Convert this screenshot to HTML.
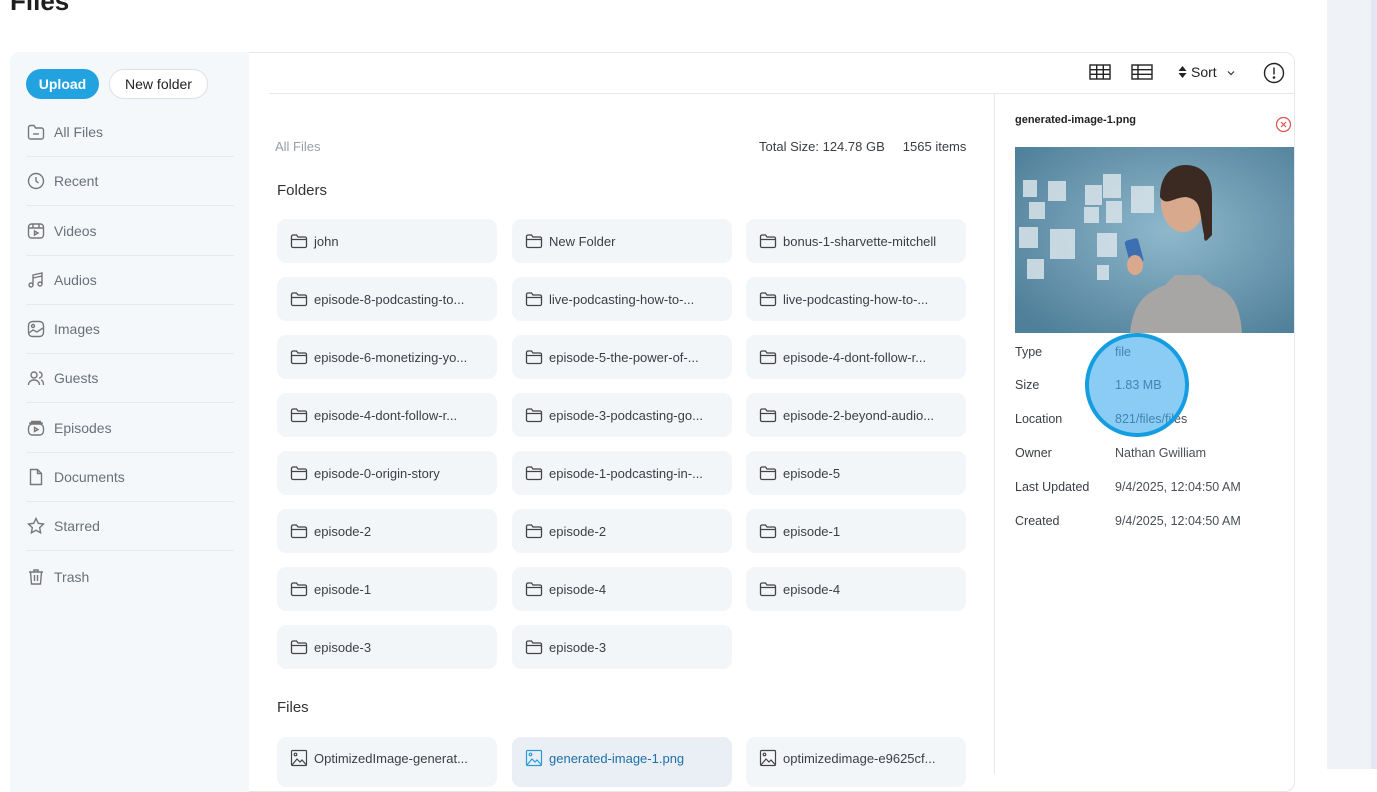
<!DOCTYPE html>
<html><head><meta charset="utf-8">
<style>
*{margin:0;padding:0;box-sizing:border-box}
body{width:1377px;height:769px;overflow:hidden;background:#fff;font-family:"Liberation Sans",sans-serif;position:relative;color:#333}
.abs{position:absolute}
.title{left:10px;top:-14px;font-size:26px;font-weight:bold;color:#1e1e1e}
.card{left:10px;top:52px;width:1285px;height:740px;border:1px solid #e4e7ec;border-radius:10px;background:#fff;overflow:hidden}
.side{left:10px;top:52px;width:239px;height:740px;background:#f5f8fb;border-radius:10px 0 0 0}
.btn{top:69px;height:30px;border-radius:15px;font-size:14px;display:flex;align-items:center;justify-content:center}
.nav{left:26px;width:208px;height:49px;display:flex;align-items:center;font-size:14px;color:#6a7079;border-bottom:1px solid #e6e9ed}
.nav svg{width:20px;height:20px;margin-right:8px;flex:none}
.fc{width:220px;height:44px;background:#f3f6f9;border-radius:9px;display:flex;align-items:center;padding-left:13px;font-size:13px;color:#3b3f45}
.fc svg{width:18px;height:18px;margin-right:6px;flex:none}
.lbl{left:1015px;font-size:12.5px;color:#3a3e44}
.val{left:1115px;font-size:12.5px;color:#4a4e55}
</style></head><body>
<div class="abs title">Files</div>
<div class="abs card"></div>
<div class="abs side"></div>
<div class="abs btn" style="left:26px;width:73px;background:#23a2e0;color:#fff;font-weight:bold">Upload</div>
<div class="abs btn" style="left:109px;width:99px;background:#fff;border:1px solid #dde1e6;color:#222">New folder</div>

<div class="abs" style="left:0;top:108px">
<div class="nav abs" style="top:0"><svg viewBox="0 0 20 20" fill="none" stroke="#777" stroke-width="1.4"><path d="M2.5 6V15a2 2 0 0 0 2 2h11a2 2 0 0 0 2-2V8a2 2 0 0 0-2-2H9.5L8 3.5H4.5a2 2 0 0 0-2 2z"/><path d="M7 12h6"/></svg>All Files</div>
<div class="nav abs" style="top:49px"><svg viewBox="0 0 20 20" fill="none" stroke="#777" stroke-width="1.4"><circle cx="10" cy="10" r="7.5"/><path d="M10 6v4l2.5 2"/></svg>Recent</div>
<div class="nav abs" style="top:99px"><svg viewBox="0 0 20 20" fill="none" stroke="#777" stroke-width="1.4"><rect x="2.5" y="3" width="15" height="14" rx="3"/><path d="M2.5 7h15M7 3v4M13 3v4M8.5 10v4l3.5-2z"/></svg>Videos</div>
<div class="nav abs" style="top:148px"><svg viewBox="0 0 20 20" fill="none" stroke="#777" stroke-width="1.4"><circle cx="5" cy="15" r="2"/><circle cx="14" cy="14" r="2"/><path d="M7 15V5l9-2v11M7 8l9-2"/></svg>Audios</div>
<div class="nav abs" style="top:197px"><svg viewBox="0 0 20 20" fill="none" stroke="#777" stroke-width="1.4"><rect x="2.5" y="2.5" width="15" height="15" rx="4"/><circle cx="7" cy="7" r="1.5"/><path d="M3 14l4-3 4 2 6-4"/></svg>Images</div>
<div class="nav abs" style="top:246px"><svg viewBox="0 0 20 20" fill="none" stroke="#777" stroke-width="1.4"><circle cx="8" cy="7" r="3"/><path d="M2.5 17c0-3 2.5-5 5.5-5s5.5 2 5.5 5M13 4a3 3 0 0 1 0 6M15 12c1.5.5 2.5 2.5 2.5 5"/></svg>Guests</div>
<div class="nav abs" style="top:296px"><svg viewBox="0 0 20 20" fill="none" stroke="#777" stroke-width="1.4"><rect x="2.5" y="6" width="15" height="11" rx="4"/><path d="M5 3.5h10M4 6V5h12v1M8.5 9.5v4l3.5-2z"/></svg>Episodes</div>
<div class="nav abs" style="top:345px"><svg viewBox="0 0 20 20" fill="none" stroke="#777" stroke-width="1.4"><path d="M4.5 2.5h7l4 4v11h-11z"/><path d="M11.5 2.5v4h4"/></svg>Documents</div>
<div class="nav abs" style="top:394px"><svg viewBox="0 0 20 20" fill="none" stroke="#777" stroke-width="1.4"><path d="M10 2.5l2.3 4.8 5.2.7-3.8 3.6.9 5.2L10 14.3l-4.6 2.5.9-5.2L2.5 8l5.2-.7z"/></svg>Starred</div>
<div class="nav abs" style="top:444px;border-bottom:none"><svg viewBox="0 0 20 20" fill="none" stroke="#777" stroke-width="1.4"><path d="M3 5h14M8 5V3h4v2M4.5 5l1 12h9l1-12M8.5 8v6M11.5 8v6"/></svg>Trash</div>
</div>

<div class="abs" style="left:269px;top:93px;width:1026px;height:1px;background:#e4e7ec"></div>
<svg class="abs" style="left:1089px;top:63px" width="22" height="18" viewBox="0 0 22 18" fill="none" stroke="#222" stroke-width="1.4"><rect x="1" y="2" width="20" height="14"/><path d="M1 6.7h20M1 11.3h20M7.7 2v14M14.3 2v14"/></svg>
<svg class="abs" style="left:1131px;top:63px" width="22" height="18" viewBox="0 0 22 18" fill="none" stroke="#222" stroke-width="1.4"><rect x="1" y="2" width="20" height="14"/><path d="M1 6.7h20M1 11.3h20M7 2v14"/></svg>
<svg class="abs" style="left:1178px;top:66px" width="9" height="12" viewBox="0 0 9 12" fill="#222"><path d="M4.5 0L8.5 5H0.5zM4.5 12L0.5 7H8.5z"/></svg>
<div class="abs" style="left:1191px;top:64px;font-size:14px;color:#222">Sort</div>
<svg class="abs" style="left:1226px;top:69px" width="10" height="8" viewBox="0 0 10 8" fill="none" stroke="#333" stroke-width="1.2"><path d="M2 2.5l3 3 3-3"/></svg>
<svg class="abs" style="left:1263px;top:62px" width="22" height="22" viewBox="0 0 22 22" fill="none" stroke="#222" stroke-width="1.4"><circle cx="11" cy="11" r="9.5"/><path d="M11 5.5v7"/><circle cx="11" cy="15.5" r=".6" fill="#222"/></svg>

<div class="abs" style="left:275px;top:139px;font-size:13px;color:#9a9ea4">All Files</div>
<div class="abs" style="left:759px;top:139px;font-size:13px;color:#3a3e44">Total Size: 124.78 GB &nbsp;&nbsp;&nbsp;&nbsp;1565 items</div>
<div class="abs" style="left:277px;top:182px;font-size:15px;color:#333">Folders</div>
<div class="abs" style="left:277px;top:699px;font-size:15px;color:#333">Files</div>

<div id="grid"></div>

<div class="abs" style="left:994px;top:94px;width:1px;height:680px;background:#e4e7ec"></div>
<div class="abs" style="left:1015px;top:114px;font-size:11px;font-weight:bold;color:#222">generated-image-1.png</div>
<svg class="abs" style="left:1275px;top:116px" width="17" height="17" viewBox="0 0 17 17" fill="none" stroke="#d9534f" stroke-width="1.2"><circle cx="8.5" cy="8.5" r="7"/><path d="M6 6l5 5M11 6l-5 5"/></svg>
<svg class="abs" style="left:1015px;top:147px" width="279" height="186" viewBox="0 0 279 186">
<defs><radialGradient id="bg" cx="55%" cy="45%" r="70%"><stop offset="0" stop-color="#8fb8cc"/><stop offset="1" stop-color="#4f7f99"/></radialGradient></defs>
<rect width="279" height="186" fill="url(#bg)"/>
<g fill="#d9e4ea" opacity=".85"><rect x="8" y="33" width="14" height="17"/><rect x="33" y="34" width="18" height="20"/><rect x="70" y="38" width="17" height="20"/><rect x="88" y="27" width="18" height="24"/><rect x="116" y="39" width="23" height="27"/><rect x="14" y="55" width="16" height="17"/><rect x="69" y="60" width="15" height="16"/><rect x="91" y="54" width="16" height="22"/><rect x="4" y="80" width="19" height="21"/><rect x="35" y="82" width="25" height="30"/><rect x="82" y="86" width="20" height="24"/><rect x="12" y="112" width="17" height="20"/><rect x="82" y="118" width="12" height="15"/></g>
<path d="M115 186c3-30 15-40 35-48l10-10h25l12 10c20 6 28 20 30 48z" fill="#a8a6a4"/>
<ellipse cx="168" cy="55" rx="22" ry="30" fill="#d9a98e"/>
<path d="M145 50c0-25 15-32 25-32 18 0 27 12 27 30v40c-5 5-8 10-8 0-5-25-2-35-18-38-12 0-20 10-26 0z" fill="#3a2a22"/>
<rect x="112" y="92" width="14" height="25" rx="3" fill="#3c6fb2" transform="rotate(-15 119 104)"/>
<ellipse cx="120" cy="118" rx="8" ry="10" fill="#d9a98e"/>
</svg>
<div class="abs lbl" style="top:345px">Type</div><div class="abs val" style="top:345px">file</div>
<div class="abs lbl" style="top:378px">Size</div><div class="abs val" style="top:378px">1.83 MB</div>
<div class="abs lbl" style="top:412px">Location</div><div class="abs val" style="top:412px">821/files/files</div>
<div class="abs lbl" style="top:446px">Owner</div><div class="abs val" style="top:446px">Nathan Gwilliam</div>
<div class="abs lbl" style="top:480px">Last Updated</div><div class="abs val" style="top:480px">9/4/2025, 12:04:50 AM</div>
<div class="abs lbl" style="top:514px">Created</div><div class="abs val" style="top:514px">9/4/2025, 12:04:50 AM</div>
<div class="abs" style="left:1085px;top:333px;width:104px;height:104px;border-radius:50%;background:rgba(60,170,235,.6);border:4px solid #149de0"></div>

<div class="abs" style="left:1327px;top:0;width:44px;height:769px;background:#eff3f8"></div>
<div class="abs" style="left:1371px;top:0;width:6px;height:769px;background:#e4e6f3"></div>

<script>
const F='<svg viewBox="0 0 18 18" fill="none" stroke="#444" stroke-width="1.3"><path d="M1.5 4.5v9.5a1.5 1.5 0 0 0 1.5 1.5h12a1.5 1.5 0 0 0 1.5-1.5V6.5A1.5 1.5 0 0 0 15 5H8L6.5 3H3a1.5 1.5 0 0 0-1.5 1.5zM1.5 7.5h15"/></svg>';
const I=c=>'<svg viewBox="0 0 18 18" fill="none" stroke="'+c+'" stroke-width="1.2"><rect x="1.5" y="1.5" width="15" height="15" rx="1"/><circle cx="5.5" cy="5.5" r="1.3"/><path d="M2 16l5-6 3 3 2-2 4.5 5"/></svg>';
const names=["john","New Folder","bonus-1-sharvette-mitchell","episode-8-podcasting-to...","live-podcasting-how-to-...","live-podcasting-how-to-...","episode-6-monetizing-yo...","episode-5-the-power-of-...","episode-4-dont-follow-r...","episode-4-dont-follow-r...","episode-3-podcasting-go...","episode-2-beyond-audio...","episode-0-origin-story","episode-1-podcasting-in-...","episode-5","episode-2","episode-2","episode-1","episode-1","episode-4","episode-4","episode-3","episode-3"];
const xs=[277,512,746];let h='';
names.forEach((n,i)=>{h+='<div class="abs fc" style="left:'+xs[i%3]+'px;top:'+(219+58*Math.floor(i/3))+'px">'+F+n+'</div>';});
const files=["OptimizedImage-generat...","generated-image-1.png","optimizedimage-e9625cf..."];
files.forEach((n,i)=>{const s=i==1;h+='<div class="abs fc" style="left:'+xs[i]+'px;top:737px;height:50px;padding-bottom:8px;'+(s?'background:#e9eff5;color:#1f6fa8':'')+'">'+I(s?'#2a9bd8':'#444')+n+'</div>';});
document.getElementById('grid').innerHTML=h;
</script>
</body></html>
